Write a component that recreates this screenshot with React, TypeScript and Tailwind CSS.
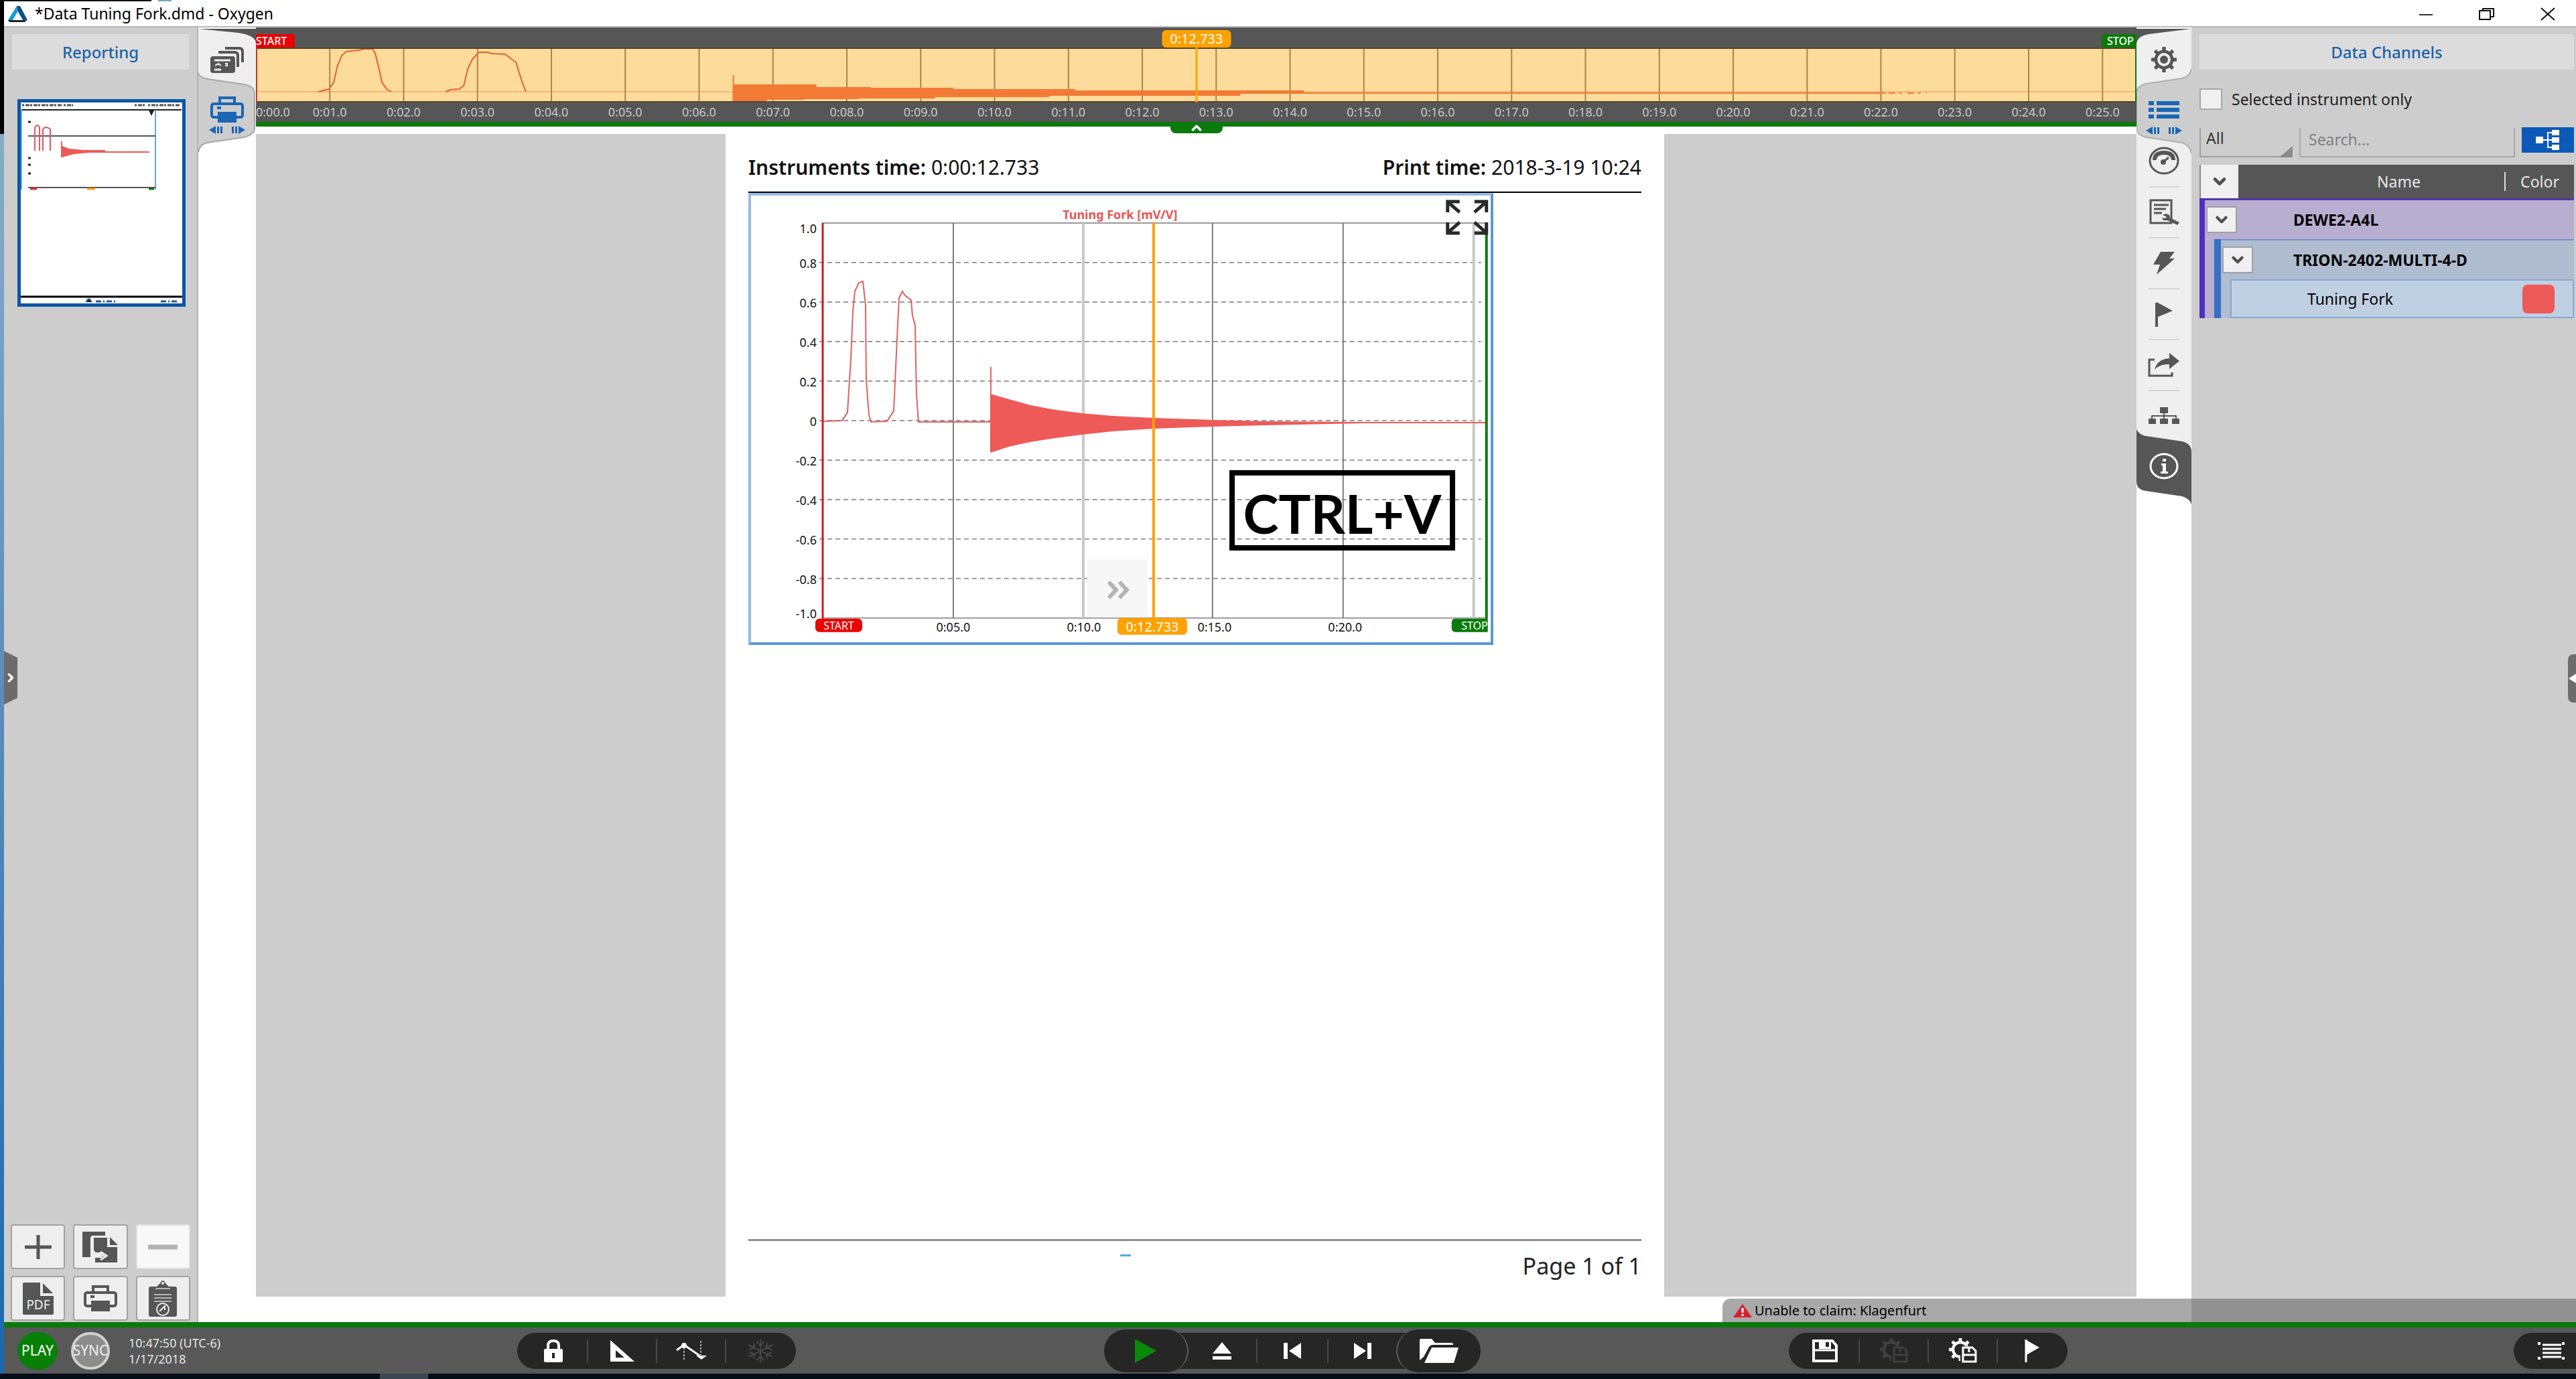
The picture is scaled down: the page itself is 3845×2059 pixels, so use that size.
import type { ReactNode } from 'react';
import { ChevronDown, ChevronRight, ChevronUp } from 'lucide-react';

const DARK = '#565656';

interface IconProps {
  w: number;
  h: number;
  children: ReactNode;
}

function Icon({ w, h, children }: IconProps) {
  return (
    <svg width={w} height={h} viewBox={`0 0 ${w} ${h}`} fill="none" aria-hidden="true" className="shrink-0">
      {children}
    </svg>
  );
}

function PrinterIcon({ color = DARK }: { color?: string }) {
  return (
    <Icon w={50} h={40}>
      <path d="M14 11V2h22v9" stroke={color} strokeWidth="4" />
      <rect x="2" y="11" width="46" height="20" rx="3" stroke={color} strokeWidth="4" />
      <rect x="10" y="15" width="6" height="4" fill={color} />
      <rect x="11" y="23" width="28" height="16" fill={color} />
    </Icon>
  );
}

function ResizeArrows() {
  return (
    <Icon w={54} h={12}>
      <path d="M0 6 10 0v12ZM12 1h3v10h-3zM17 1h3v10h-3zM54 6 44 0v12ZM39 1h3v10h-3zM34 1h3v10h-3z" fill="#1b66b5" />
    </Icon>
  );
}

function GearShape({ cx, cy, r, color, hole }: { cx: number; cy: number; r: number; color: string; hole: string }) {
  return (
    <g>
      {[0, 45, 90, 135].map((a) => (
        <rect key={a} x={cx - r * 0.14} y={cy - r} width={r * 0.28} height={r * 2} fill={color} transform={`rotate(${a} ${cx} ${cy})`} />
      ))}
      <circle cx={cx} cy={cy} r={r * 0.76} fill={color} />
      <circle cx={cx} cy={cy} r={r * 0.52} fill={hole} />
    </g>
  );
}

/* ---------- Title bar ---------- */

function TitleBar() {
  return (
    <header className="flex h-[37px] items-center bg-white pl-1">
      <Icon w={32} h={26}>
        <path d="M15 1 2 22h7l7-12Z" fill="#1d9bd8" />
        <path d="M15 1h5l11 21-5 3-10-17Z" fill="#0f4f86" />
        <path d="M2 22h24l2 3H4Z" fill="#222" />
      </Icon>
      <h1 className="pl-[10px] text-[23px] leading-none text-black">*Data Tuning Fork.dmd - Oxygen</h1>
      <div className="ml-auto flex items-center gap-[63px] pr-7">
        <button aria-label="Minimize" className="flex w-7 justify-center">
          <Icon w={20} h={20}><path d="M0 11h20" stroke="#333" strokeWidth="2" /></Icon>
        </button>
        <button aria-label="Restore" className="flex w-7 justify-center">
          <Icon w={24} h={20}>
            <rect x="1" y="5" width="16" height="13" stroke="#111" strokeWidth="2" />
            <path d="M6 5V2h16v12h-4" stroke="#111" strokeWidth="2" />
          </Icon>
        </button>
        <button aria-label="Close" className="flex w-7 justify-center">
          <Icon w={22} h={20}><path d="m1 1 20 18M21 1 1 19" stroke="#111" strokeWidth="2" /></Icon>
        </button>
      </div>
    </header>
  );
}

/* ---------- Left side ---------- */

function PageThumbnail() {
  return (
    <button aria-label="Page 1" className="ml-5 mt-11 block w-[251px] border-[5px] border-[#0b56a4] bg-white">
      <svg viewBox="0 0 241 300" className="block w-full">
        <path d="M2 4h60M64 4h14M170 4h16M190 4h48" stroke="#555" strokeWidth="3" strokeDasharray="3 2 6 1" />
        <path d="M1 11h239" stroke="#222" strokeWidth="2" />
        <path d="M201 11V130M1 11V130" stroke="#6aa5dd" strokeWidth="2" />
        <path d="M11 50h190M11 127h190" stroke="#555" strokeWidth="2" />
        <path d="M11 29h4M11 83h4M11 93h4M11 106h4" stroke="#222" strokeWidth="3" />
        <path d="M191 12h8l-4 8Z" fill="#222" />
        <path d="M21 72V37q4-6 7 0v35M33 72V40q4-6 11 0v32" stroke="#dd5a66" strokeWidth="2" fill="none" />
        <path d="M60 58h2v7l10 4 22 2h32v2h66v2H102l-22 2-12 3-6 2h-2Z" fill="#ee5a57" />
        <path d="M14 129h10" stroke="#e03030" strokeWidth="3" />
        <path d="M99 129h12" stroke="#ffa500" strokeWidth="3" />
        <path d="M191 129h8" stroke="#0a7a0a" strokeWidth="3" />
        <path d="M0 290h241" stroke="#000" strokeWidth="3" />
        <path d="M98 298q4-8 8 0M112 297h32M209 297h24" stroke="#245a86" strokeWidth="3" strokeDasharray="8 3 2 3" />
      </svg>
    </button>
  );
}

interface ToolButtonProps {
  label: string;
  disabled?: boolean;
  children: ReactNode;
}

function ToolButton({ label, disabled, children }: ToolButtonProps) {
  return (
    <button
      aria-label={label}
      disabled={disabled}
      className="flex h-[67px] items-center justify-center rounded-sm border-2 border-[#a2a2a2] bg-[#eeeeee] disabled:border-[#e0e0e0] disabled:bg-[#f8f8f8]"
    >
      {children}
    </button>
  );
}

function ReportingPanel() {
  return (
    <aside className="flex w-[290px] shrink-0 flex-col border-r-2 border-[#b4b4b4] bg-[#cdcdcd] pt-[10px]">
      <h2 className="mx-3 flex h-[53px] items-center justify-center bg-[#dcdcdc] text-[24px] font-medium text-[#1c62a8]">Reporting</h2>
      <PageThumbnail />
      <div className="mt-auto grid grid-cols-3 gap-x-3 gap-y-[10px] px-[10px] pb-[2px]">
        <ToolButton label="Add page">
          <Icon w={44} h={40}><path d="M22 2v36M2 20h40" stroke={DARK} strokeWidth="5" /></Icon>
        </ToolButton>
        <ToolButton label="Duplicate page">
          <Icon w={54} h={48}>
            <path d="M0 1h34v6H16q-4 0-4 4v28H0Z" fill={DARK} />
            <path d="M17 10h20v14h15v23H19v-7l10 0v-8H17Z" fill={DARK} />
            <path d="M41 9 53 21H41Z" fill={DARK} />
            <path d="M14 22q0 14 18 15M27 31l9 6-9 6" stroke="#eee" strokeWidth="3" />
          </Icon>
        </ToolButton>
        <ToolButton label="Remove page" disabled>
          <Icon w={44} h={8}><path d="M0 4h44" stroke="#b2b2b2" strokeWidth="7" /></Icon>
        </ToolButton>
        <ToolButton label="Export PDF">
          <svg width="46" height="48" viewBox="0 0 46 48" aria-hidden="true">
            <path d="M0 2Q0 0 2 0h24v20h20v26q0 2-2 2H2q-2 0-2-2Z" fill={DARK} />
            <path d="m30 1 15 15H30Z" fill={DARK} />
            <text x="23" y="40" textAnchor="middle" fontSize="19" fill="#eee">PDF</text>
          </svg>
        </ToolButton>
        <ToolButton label="Print">
          <PrinterIcon />
        </ToolButton>
        <ToolButton label="Paste from clipboard">
          <Icon w={42} h={56}>
            <path d="M3 10h9l5-5q4-8 8 0l5 5h9q3 0 3 3v39q0 3-3 3H3q-3 0-3-3V13q0-3 3-3Z" fill={DARK} />
            <circle cx="21" cy="5" r="2" fill="#eee" />
            <path d="M10 13h22M8 22h26M8 27h26M8 32h26" stroke="#b4b4b4" strokeWidth="2" />
            <circle cx="21" cy="44" r="9" stroke="#eee" strokeWidth="2" />
            <path d="m16 47 8-8v6" stroke="#eee" strokeWidth="2" />
          </Icon>
        </ToolButton>
      </div>
    </aside>
  );
}

function LeftTabs() {
  return (
    <nav className="relative flex w-[86px] shrink-0 flex-col items-center bg-white">
      <svg className="absolute left-0 top-0" width="86" height="190" viewBox="0 0 86 190" aria-hidden="true">
        <path d="M0 2H86V40H0Z" fill={DARK} />
        <path d="M0 2 60 8Q86 12 86 24V96L0 78Z" fill="#efefef" />
        <path d="M0 68Q2 75 14 77L68 85Q84 88 84 98V150Q84 160 68 164L14 172Q2 174 0 186Z" fill="#cdcdcd" />
        <path d="M0 68Q2 75 14 77L68 85Q84 88 84 98V150Q84 160 68 164L14 172Q2 174 0 186" fill="none" stroke="#a8a8a8" strokeWidth="2" />
      </svg>
      <button aria-label="Screens" className="relative flex h-24 items-center">
        <Icon w={50} h={40}>
          <path d="M22 3h21q5 0 5 5v16" stroke={DARK} strokeWidth="4" />
          <path d="M12 9h24q5 0 5 5v17" stroke={DARK} strokeWidth="4" />
          <rect x="0" y="15" width="37" height="25" rx="4" fill={DARK} />
          <path d="M6 21h24M6 35h10" stroke="#efefef" strokeWidth="3" />
          <path d="m7 29 5-3 4 3M22 26h3v3h-3" stroke="#efefef" strokeWidth="2" />
        </Icon>
      </button>
      <button aria-label="Reporting" className="relative flex flex-col items-center gap-1 pt-[7px]">
        <PrinterIcon color="#1b66b5" />
        <ResizeArrows />
      </button>
    </nav>
  );
}

/* ---------- Overview timeline ---------- */

const SPAN = 25.46;
const seconds = Array.from({ length: 26 }, (_, i) => i);

function stamp(s: number) {
  return `0:${String(s).padStart(2, '0')}.0`;
}

function percent(s: number) {
  return `${(s / SPAN) * 100}%`;
}

function Timeline() {
  return (
    <section className="relative h-[148px] bg-[#565656] pt-[30px]">
      <span className="absolute left-0 top-[10px] flex h-5 w-[58px] items-center rounded-tr bg-[#ec0000] text-[16px] font-medium leading-none text-white">START</span>
      <span className="absolute right-0 top-[10px] flex h-5 w-[52px] items-center rounded-tl bg-[#0a7a0a] pl-2 text-[16px] font-medium leading-none text-white">STOP</span>
      <svg viewBox="0 0 2805 82" preserveAspectRatio="none" className="block h-[82px] w-full">
        <rect width="2805" height="82" fill="#fddb9a" />
        <path d="M0 66H711M1563 66H2805" stroke="#f5b878" strokeWidth="2" fill="none" />
        <path
          d="M93 66 109 62 116 52 122 26 128 12 135 6 153 4 162 2H174L178 9 183 29 188 52 195 62 202 66M283 66 290 63 303 62 310 57 316 32 323 17 333 7H347L350 9 372 10 381 17 388 22 394 42 399 57 403 66"
          stroke="#e8622a"
          strokeWidth="2"
          fill="none"
        />
        {seconds.slice(1).map((s) => (
          <rect key={s} x={(s / SPAN) * 2805 - 1} width="2" height="82" fill="#a8874a" />
        ))}
        <path
          d="M711 41h2V55H836V59H917V60H1040V62H1222V64H1563V67H2431V69H1468V72H1183V74H1013V76H899V77H818V78H762V80H716V82H711Z"
          fill="#f37a35"
        />
        <path d="M2435 68H2492" stroke="#f37a35" strokeWidth="2" strokeDasharray="10 6 4 8" />
        <path d="M0 1H2805M0 81H2805" stroke="#54452c" strokeWidth="2" />
        <path d="M1 0V82" stroke="#c0392b" strokeWidth="2" />
        <path d="M2804 0V82" stroke="#0a7a0a" strokeWidth="2" />
      </svg>
      <div className="relative h-[29px] overflow-hidden text-[18px] leading-7 text-[#c8c8c8]">
        {seconds.map((s) => (
          <span key={s} className={s === 0 ? 'absolute left-0' : 'absolute -translate-x-1/2'} style={s === 0 ? undefined : { left: percent(s) }}>
            {stamp(s)}
          </span>
        ))}
      </div>
      <div className="h-[7px] bg-[#0a7a0a]" />
      <div className="absolute top-1 flex -translate-x-1/2 flex-col items-center" style={{ left: percent(12.733) }}>
        <span className="flex h-[26px] w-[103px] items-center justify-center rounded-md bg-[#ffa200] text-[20px] leading-none text-white">0:12.733</span>
        <span className="h-[82px] w-[3px] bg-[#ffa200]" />
      </div>
      <button
        aria-label="Collapse timeline"
        className="absolute top-[141px] flex h-[17px] w-[78px] -translate-x-1/2 items-center justify-center rounded-b-lg bg-[#0a7a0a] text-white"
        style={{ left: percent(12.733) }}
      >
        <ChevronUp size={22} strokeWidth={4} />
      </button>
    </section>
  );
}

/* ---------- Report page ---------- */

const yTicks = ['1.0', '0.8', '0.6', '0.4', '0.2', '0', '-0.2', '-0.4', '-0.6', '-0.8', '-1.0'];
const xTicks = [5, 10, 15, 20];

function Recorder() {
  return (
    <svg viewBox="0 0 1104 667" className="block w-full" fontSize="18">
      <text x="551" y="35" textAnchor="middle" fontWeight="700" fill="#e85555">Tuning Fork [mV/V]</text>
      {/* grid */}
      <path d="M106 41H1098M106 631H1098" stroke="#9a9a9a" strokeWidth="2" />
      {yTicks.slice(1, -1).map((t, i) => (
        <path key={t} d={`M102 ${100 + i * 59}H1090`} stroke="#9a9a9a" strokeWidth="2" strokeDasharray="7 5" />
      ))}
      <path d="M302 41V631M689 41V631M884 41V631" stroke="#7c7c7c" strokeWidth="2" />
      <path d="M496 41V631M1079 41V631" stroke="#c8c8c8" strokeWidth="4" />
      {yTicks.map((t, i) => (
        <text key={t} x="98" y={i === 0 ? 56 : i === 10 ? 631 : 108 + (i - 1) * 59} textAnchor="end" fill="#111">{t}</text>
      ))}
      {xTicks.map((t) => (
        <text key={t} x={107 + t * 39} y="651" textAnchor="middle" fill="#111">{stamp(t)}</text>
      ))}
      {/* signal */}
      <path
        d="M108 337 136 336 144 324 149 245 152 174 155 143 161 130 167 128 171 163 172 276 176 327 179 338 203 337 213 322 218 214 221 153 226 143 230 149 239 156 241 179 245 194 247 296 250 338H358V256"
        stroke="#e0625f"
        strokeWidth="2"
        fill="none"
      />
      <path
        d="M357 296 385 304 417 313 455 320 494 325 540 329 601 332 689 335 765 337 914 338H1098V340H914L765 343 689 345 601 348 540 352 494 357 455 362 417 368 385 375 357 384Z"
        fill="#ee5a57"
      />
      {/* cursor and range markers */}
      <rect x="502" y="543" width="90" height="87" fill="#f7f7f7" />
      <path d="m534 577 11 12-11 12M550 577l11 12-11 12" stroke="#b4b4b4" strokeWidth="6" fill="none" />
      <path d="M107 41V632" stroke="#d01818" strokeWidth="3" />
      <path d="M601 41V632" stroke="#ffa200" strokeWidth="4" />
      <path d="M1098 41V632" stroke="#0a7a0a" strokeWidth="4" />
      <rect x="96" y="632" width="70" height="20" rx="6" fill="#ec0000" />
      <text x="131" y="648" textAnchor="middle" fontSize="16" fill="#fff">START</text>
      <rect x="547" y="631" width="104" height="25" rx="6" fill="#ffa200" />
      <text x="599" y="651" textAnchor="middle" fontSize="20" fill="#fff">0:12.733</text>
      <path d="M1052 632H1100V652H1052Q1046 652 1046 646V638Q1046 632 1052 632Z" fill="#0a7a0a" />
      <text x="1100" y="648" textAnchor="end" fontSize="16" fill="#fff">STOP</text>
      {/* maximize */}
      <path
        d="M1040 25V9h18M1042 11l16 14M1098 25V9h-18M1096 11l-16 14M1040 40V56h18M1042 54l16-14M1098 40V56h-18M1096 54l-16-14"
        stroke="#2a2a2a"
        strokeWidth="5"
        fill="none"
      />
    </svg>
  );
}

function ReportPage() {
  return (
    <article className="flex flex-col bg-white px-[34px]">
      <div className="flex h-[86px] items-end justify-between pb-[18px] text-[30px] leading-9 text-[#111]">
        <p className="flex items-baseline gap-2">
          <b className="font-semibold">Instruments time:</b>0:00:12.733
        </p>
        <p className="flex items-baseline gap-2">
          <b className="font-semibold">Print time:</b>2018-3-19 10:24
        </p>
      </div>
      <div className="border-t-2 border-black">
        <div className="relative w-[83.4%] border-4 border-[#93bbe8] border-b-[#5b97d6] border-r-[#5b97d6]">
          <Recorder />
          <div className="absolute right-[4.8%] top-[61.5%] flex h-[120px] w-[30.5%] items-center justify-center border-8 border-black pt-2 font-[Lato] text-[80px] font-bold leading-none text-black">
            CTRL+V
          </div>
        </div>
      </div>
      <footer className="mb-7 mt-auto border-t-[3px] border-[#8f8f8f]">
        <div className="ml-[41.6%] mt-5 h-[3px] w-4 bg-[#5aa9dc]" />
        <p className="-mt-1 text-right text-[34px] leading-9 text-[#222]">Page 1 of 1</p>
      </footer>
    </article>
  );
}

/* ---------- Right side ---------- */

function RightTabs() {
  return (
    <nav className="relative flex w-[82px] shrink-0 flex-col items-center bg-white">
      <svg className="absolute left-0 top-0" width="82" height="716" viewBox="0 0 82 716" aria-hidden="true">
        <path d="M0 2H82V40H0Z" fill={DARK} />
        <path d="M82 2 18 10Q0 13 0 26V622H82Z" fill="#efefef" />
        <path d="M82 62Q80 73 68 76L14 84Q0 88 0 98V150Q0 160 14 164L68 172Q80 176 82 188Z" fill="#cdcdcd" />
        <path d="M82 62Q80 73 68 76L14 84Q0 88 0 98V150Q0 160 14 164L68 172Q80 176 82 188" fill="none" stroke="#b0b0b0" strokeWidth="2" />
        <path d="M0 600Q4 608 14 610L68 618Q82 621 82 634V712Q80 704 68 700L14 692Q0 690 0 678Z" fill={DARK} />
      </svg>
      <button aria-label="Settings" className="relative flex h-24 items-center">
        <Icon w={40} h={40}>
          <GearShape cx={20} cy={20} r={19} color={DARK} hole="#efefef" />
          <circle cx="20" cy="20" r="6" fill={DARK} />
        </Icon>
      </button>
      <button aria-label="Data channels" className="relative flex h-[65px] flex-col items-center gap-3 pt-[14px]">
        <Icon w={46} h={26}>
          <path d="M0 3h8M12 3h34M0 13h8M12 13h34M0 23h8M12 23h34" stroke="#1b66b5" strokeWidth="6" />
        </Icon>
        <ResizeArrows />
      </button>
      <TabButton label="Instruments">
        <Icon w={48} h={42}>
          <ellipse cx="24" cy="21" rx="21" ry="19" stroke={DARK} strokeWidth="3" />
          <path d="M10 20Q10 9 24 9t14 11" stroke={DARK} strokeWidth="6" />
          <path d="m23 23 8-7" stroke={DARK} strokeWidth="3" />
          <circle cx="23" cy="23" r="4" fill={DARK} />
        </Icon>
      </TabButton>
      <TabButton label="Instrument properties" divider>
        <Icon w={48} h={40}>
          <rect x="4" y="2" width="31" height="34" stroke={DARK} strokeWidth="3" />
          <path d="M9 9h22M9 15h18M9 21h12" stroke={DARK} strokeWidth="3" />
          <path d="m22 24 5-2 5 2 1 4 14 7-3 4-15-7h-6l-2-4 5 1 2-2Z" fill={DARK} />
        </Icon>
      </TabButton>
      <TabButton label="Trigger" divider>
        <Icon w={34} h={36}><path d="M12 1h21l-8 10h8L6 35l5-15H1Z" fill={DARK} /></Icon>
      </TabButton>
      <TabButton label="Events" divider>
        <Icon w={28} h={38}><path d="M3 2v36" stroke={DARK} strokeWidth="4" /><path d="m3 1 24 13L3 24Z" fill={DARK} /></Icon>
      </TabButton>
      <TabButton label="Export" divider>
        <Icon w={48} h={36}>
          <path d="M10 10H2v24h34v-5" stroke={DARK} strokeWidth="3" />
          <path d="M10 25Q14 9 32 8V0l15 12-15 12v-7q-14-1-22 8Z" fill={DARK} />
        </Icon>
      </TabButton>
      <TabButton label="Network" divider>
        <Icon w={48} h={28}>
          <path d="M24 8v12M6 20v-6h36v6" stroke={DARK} strokeWidth="2" />
          <path d="M18 1h12v9H18zM1 18h11v8H1zM18 18h12v8H18zM36 18h11v8H36z" fill={DARK} />
        </Icon>
      </TabButton>
      <TabButton label="Info">
        <Icon w={46} h={40}>
          <ellipse cx="23" cy="20" rx="20" ry="18" stroke="#fff" strokeWidth="3" />
          <path d="M21 9h5v4h-5zM19 16h7v12h3v3H18v-3h3v-9h-2z" fill="#fff" />
        </Icon>
      </TabButton>
    </nav>
  );
}

function TabButton({ label, divider, children }: { label: string; divider?: boolean; children: ReactNode }) {
  return (
    <button
      aria-label={label}
      className={`relative flex h-[76px] w-[46px] items-center justify-center ${divider ? 'border-t-2 border-[#d6d6d6]' : ''}`}
    >
      {children}
    </button>
  );
}

function Expander({ label }: { label: string }) {
  return (
    <button aria-label={label} className="flex h-10 w-[46px] shrink-0 items-center justify-center border-2 border-[#9f9fa8] bg-[#f0f0f0] text-[#505050]">
      <ChevronDown size={26} strokeWidth={4} />
    </button>
  );
}

function ChannelTable() {
  return (
    <table className="mt-[11px] w-full table-fixed border-separate border-spacing-0 text-left text-[23px] text-black">
      <colgroup>
        <col className="w-2" />
        <col className="w-[14px]" />
        <col className="w-[10px]" />
        <col className="w-[14px]" />
        <col />
        <col className="w-[104px]" />
      </colgroup>
      <thead className="bg-[#565656] text-[#e8e8e8]">
        <tr>
          <th colSpan={5} className="p-0 font-normal">
            <div className="flex h-[50px] items-center">
              <button aria-label="Collapse all" className="flex h-full w-[58px] items-center justify-center border-l-2 border-[#8a8a8a] bg-[#f0f0f0] text-[#505050]">
                <ChevronDown size={28} strokeWidth={4} />
              </button>
              <span className="flex-1 pl-[82px] text-center">Name</span>
            </div>
          </th>
          <th className="p-0 font-normal">
            <div className="flex h-7 items-center justify-center border-l-2 border-[#e0e0e0]">Color</div>
          </th>
        </tr>
      </thead>
      <tbody>
        <tr>
          <td className="bg-[#4f2fbf] p-0" />
          <td colSpan={5} className="border-t-[3px] border-[#5536a8] bg-[#b7aed0] p-0">
            <div className="flex h-[58px] items-center gap-[84px] pl-[2px] font-bold">
              <Expander label="Collapse DEWE2-A4L" />
              DEWE2-A4L
            </div>
          </td>
        </tr>
        <tr>
          <td className="bg-[#4f2fbf] p-0" />
          <td className="bg-[#b7aed0] p-0" />
          <td className="bg-[#3570c2] p-0" />
          <td colSpan={3} className="border-t-2 border-[#7790c8] bg-[#b0bccf] p-0">
            <div className="flex h-[58px] items-center gap-[60px] pl-[2px] font-bold">
              <Expander label="Collapse TRION-2402-MULTI-4-D" />
              TRION-2402-MULTI-4-D
            </div>
          </td>
        </tr>
        <tr>
          <td className="bg-[#4f2fbf] p-0" />
          <td className="bg-[#b7aed0] p-0" />
          <td className="bg-[#3570c2] p-0" />
          <td className="bg-[#b0bccf] p-0" />
          <td className="h-[58px] border-2 border-r-0 border-[#86a9d2] bg-[#c0d0e3] p-0 pl-[113px]">Tuning Fork</td>
          <td className="border-2 border-l-0 border-[#86a9d2] bg-[#c0d0e3] p-0">
            <div className="ml-[27px] h-[43px] w-12 rounded-lg bg-[#ee5a57]" />
          </td>
        </tr>
      </tbody>
    </table>
  );
}

function DataChannelsPanel() {
  return (
    <aside className="w-[574px] shrink-0 bg-[#cdcdcd] pl-3 pr-[3px] pt-[10px]">
      <h2 className="flex h-[53px] items-center justify-center bg-[#dcdcdc] text-[24px] font-medium text-[#1c62a8]">Data Channels</h2>
      <label className="mt-7 flex h-8 items-center gap-[14px] text-[23px] leading-none text-[#222]">
        <input type="checkbox" className="h-8 w-[34px] appearance-none border-2 border-[#a8a8a8] bg-[#f0f0f0]" />
        Selected instrument only
      </label>
      <div className="mt-[26px] flex items-end gap-[10px] text-[23px] text-[#333]">
        <div className="relative flex">
          <select aria-label="Filter" className="h-[44px] w-[139px] appearance-none border-b-2 border-l-2 border-[#a0a0a0] bg-transparent pb-3 pl-2 leading-none">
            <option>All</option>
          </select>
          <svg className="absolute bottom-0 right-0" width="20" height="17" viewBox="0 0 20 17" aria-hidden="true">
            <path d="M20 0v17H0Z" fill="#8a8a8a" />
          </svg>
        </div>
        <input
          type="search"
          aria-label="Search channels"
          placeholder="Search..."
          className="h-[44px] min-w-0 flex-1 border-x-2 border-b-2 border-[#a8a8a8] bg-transparent px-3 pb-2 placeholder:text-[#808080]"
        />
        <button aria-label="Tree view" className="mb-[7px] flex h-[38px] w-[78px] items-center justify-center bg-[#0b5ab8]">
          <Icon w={38} h={30}>
            <path d="M8 15h20M26 4h-7v22h7" stroke="#fff" strokeWidth="2" />
            <path d="M1 10h11v10H1zM25 0h11v8H25zM25 11h11v8H25zM25 22h11v8H25z" fill="#fff" />
          </Icon>
        </button>
      </div>
      <ChannelTable />
    </aside>
  );
}

/* ---------- Bottom bar ---------- */

function BarButton({ label, children }: { label: string; children: ReactNode }) {
  return (
    <button aria-label={label} className="flex h-[54px] flex-1 items-center justify-center">
      {children}
    </button>
  );
}

function Divider() {
  return <span className="h-9 w-[2px] bg-[#474747]" />;
}

function Pill({ children }: { children: ReactNode }) {
  return <div className="flex h-[54px] w-[416px] items-center rounded-full bg-[#262626] px-[3px]">{children}</div>;
}

function LockedSettings({ color }: { color: string }) {
  return (
    <Icon w={48} h={38}>
      <GearShape cx={20} cy={17} r={17} color={color} hole="#262626" />
      <rect x="20" y="12" width="26" height="26" rx="2" fill="#262626" />
      <path d="M24 35V14h14l5 5v16Z" stroke={color} strokeWidth="3" />
      <path d="M24 25h19M33 15v6" stroke={color} strokeWidth="3" />
    </Icon>
  );
}

function BottomBar() {
  return (
    <footer className="flex h-[77px] items-center overflow-hidden border-t-8 border-[#0a7a0a] bg-[#585858] pl-5">
      <span className="flex h-[56px] w-[60px] items-center justify-center rounded-full bg-[#078007] text-[21px] text-white">PLAY</span>
      <span className="ml-5 flex h-[56px] w-[58px] items-center justify-center rounded-full border-4 border-[#d0d0d0] bg-[#8c8c8c] text-[21px] text-[#eeeeee]">
        <span className="-mx-2">SYNC</span>
      </span>
      <p className="ml-7 w-[144px] whitespace-nowrap text-[18px] leading-6 text-[#e4e4e4]">
        10:47:50 (UTC-6)
        <br />
        1/17/2018
      </p>
      <span className="flex-[436]" />
      <Pill>
        <BarButton label="Lock">
          <Icon w={30} h={34}>
            <path d="M7 15V9q0-7 8-7t8 7v6" stroke="#fff" strokeWidth="4" />
            <rect x="1" y="14" width="28" height="20" rx="2" fill="#fff" />
            <rect x="13" y="20" width="4" height="8" fill="#262626" />
          </Icon>
        </BarButton>
        <Divider />
        <BarButton label="Design mode">
          <Icon w={36} h={32}>
            <path fillRule="evenodd" d="M0 0 36 32H0ZM8 15v11h13Z" fill="#fff" />
          </Icon>
        </BarButton>
        <Divider />
        <BarButton label="Recorder">
          <Icon w={46} h={34}>
            <path d="M1 16 12 8l26 18" stroke="#fff" strokeWidth="3" />
            <circle cx="12" cy="9" r="4" fill="#fff" />
            <path d="m38 30-8-6h16Z" fill="#fff" />
            <path d="M12 12v20M37 2v24" stroke="#aaa" strokeWidth="2" strokeDasharray="3 2" />
          </Icon>
        </BarButton>
        <Divider />
        <BarButton label="Freeze">
          <Icon w={40} h={36}>
            <path d="M20 1v34M2 9l36 18M2 27 38 9M14 4l6 6 6-6M14 32l6-6 6 6M3 16l8-3-1-7M37 20l-8 3 1 7M3 20l8 3-1 7M37 16l-8-3 1-7" stroke="#474747" strokeWidth="2" />
          </Icon>
        </BarButton>
      </Pill>
      <span className="flex-[460]" />
      {/* transport */}
      <div className="flex items-center">
        <button aria-label="Play" className="z-10 -mr-5 flex h-16 w-[126px] items-center justify-center rounded-full border-r-2 border-[#5c5c5c] bg-[#262626]">
          <Icon w={32} h={36}><path d="m0 0 32 18L0 36Z" fill="#0a8a0a" /></Icon>
        </button>
        <div className="flex h-[54px] w-[350px] items-center bg-[#262626] px-[18px]">
          <BarButton label="Eject">
            <Icon w={28} h={26}><path d="m14 0 14 17H0ZM0 21h28v5H0z" fill="#fff" /></Icon>
          </BarButton>
          <Divider />
          <BarButton label="Previous">
            <Icon w={26} h={24}><path d="M0 0h6v24H0zM26 0v24L8 12Z" fill="#fff" /></Icon>
          </BarButton>
          <Divider />
          <BarButton label="Next">
            <Icon w={26} h={24}><path d="M20 0h6v24h-6zM0 0v24l18-12Z" fill="#fff" /></Icon>
          </BarButton>
        </div>
        <button aria-label="Open file" className="-ml-5 flex h-16 w-[126px] items-center justify-center rounded-full border-l-2 border-[#5c5c5c] bg-[#262626]">
          <Icon w={58} h={36}>
            <path d="M0 32V2q0-2 2-2h16l5 6h25q2 0 2 3H20q-4 0-6 3L6 27Z" fill="#fff" />
            <path d="M18 13h40l-7 23H7Z" fill="#fff" />
          </Icon>
        </button>
      </div>
      <span className="flex-[460]" />
      <Pill>
        <BarButton label="Save">
          <Icon w={38} h={34}>
            <path d="M2 2h28l6 7v23H2Z" stroke="#fff" strokeWidth="4" />
            <path d="M10 2h18v12H10z" fill="#fff" />
            <path d="M20 4h5v7h-5z" fill="#262626" />
            <path d="M2 16h34" stroke="#fff" strokeWidth="3" />
          </Icon>
        </BarButton>
        <Divider />
        <BarButton label="Load setup">
          <LockedSettings color="#404040" />
        </BarButton>
        <Divider />
        <BarButton label="Save setup">
          <LockedSettings color="#fff" />
        </BarButton>
        <Divider />
        <BarButton label="Add marker">
          <Icon w={22} h={34}><path d="M2 0v34" stroke="#fff" strokeWidth="3" /><path d="m1 0 21 12L1 24Z" fill="#fff" /></Icon>
        </BarButton>
      </Pill>
      <span className="flex-[666]" />
      <button aria-label="Menu" className="flex h-[54px] w-[93px] items-center rounded-l-full bg-[#262626] pl-9">
        <Icon w={40} h={26}>
          <path d="M7 4h28M7 10h28M7 16h28M7 22h28" stroke="#fff" strokeWidth="3" />
          <path d="M0 0h4v4H0zM36 0h4v4h-4zM0 22h4v4H0zM36 22h4v4h-4z" fill="#fff" />
        </Icon>
      </button>
    </footer>
  );
}

function Toast() {
  return (
    <div role="status" className="absolute bottom-0 right-0 flex h-[35px] w-[1274px] items-center gap-1 rounded-tl-xl bg-[#5a5a5a]/52 pl-4 text-[20px] leading-none text-black">
      <Icon w={28} h={22}>
        <path d="M14 1 28 21H0Z" fill="#dc1f30" />
        <path d="M14 7v7M14 16v3" stroke="#fff" strokeWidth="3" />
      </Icon>
      Unable to claim: Klagenfurt
    </div>
  );
}

export default function App() {
  return (
    <div className="flex min-h-screen flex-col bg-white font-['Noto_Sans','Open_Sans',sans-serif]">
      <div className="flex h-[2px]">
        <span className="w-[226px] bg-[#111]" />
        <span className="ml-[10px] w-5 bg-[#6aa9c8]" />
      </div>
      <div className="relative flex flex-1">
        <div className="flex w-[6px] shrink-0 flex-col">
          <span className="h-[198px] bg-black" />
          <span className="flex-1 bg-linear-to-b from-[#86abc9] to-[#1568ae]" />
        </div>
        <div className="flex min-w-0 flex-1 flex-col">
          <TitleBar />
          <div className="relative flex flex-1 border-t-2 border-[#b9b9b9]">
            <ReportingPanel />
            <LeftTabs />
            <main className="flex min-w-0 flex-1 flex-col bg-white">
              <Timeline />
              <div className="mb-[38px] mt-[11px] grid flex-1 grid-cols-[701fr_1401fr_705fr]">
                <div className="bg-[#cdcdcd]" />
                <ReportPage />
                <div className="bg-[#cdcdcd]" />
              </div>
            </main>
            <RightTabs />
            <DataChannelsPanel />
            <Toast />
          </div>
          <BottomBar />
        </div>
        <button
          aria-label="Show left panel"
          className="absolute left-[6px] top-[970px] flex h-20 w-5 items-center justify-center bg-[#6c6c6c] text-white [clip-path:polygon(0_0,100%_10px,100%_70px,0_100%)]"
        >
          <ChevronRight size={22} strokeWidth={4} />
        </button>
        <button aria-label="Show right panel" className="absolute right-0 top-[975px] flex h-[72px] w-3 items-center rounded-l-lg bg-[#6c6c6c]">
          <Icon w={12} h={14}><path d="M12 0v14L1 7Z" fill="#fff" /></Icon>
        </button>
      </div>
      {/* desktop taskbar edge */}
      <div className="flex h-2 bg-[#050d16]">
        <span className="ml-[567px] w-[72px] bg-[#3b4650]" />
      </div>
    </div>
  );
}
